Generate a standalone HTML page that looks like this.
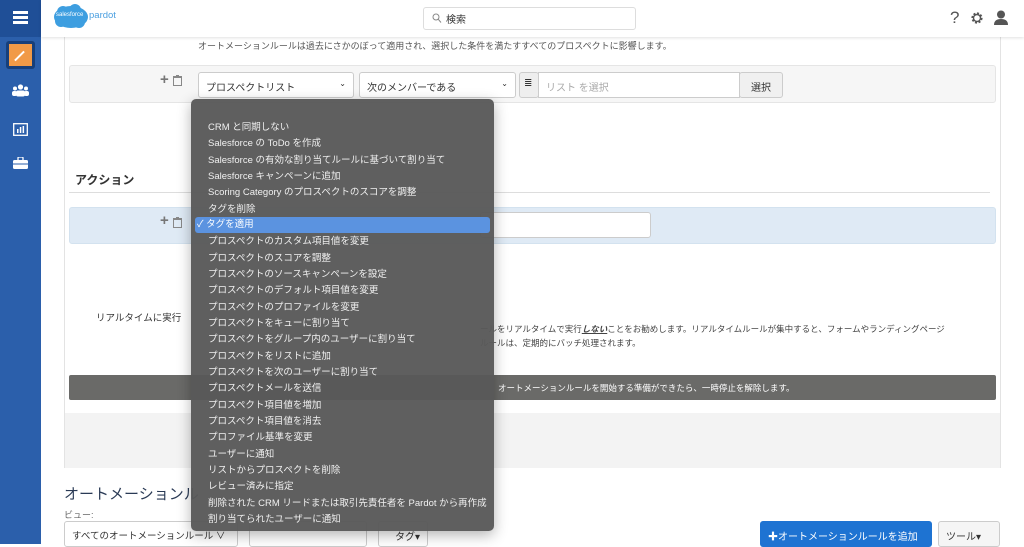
<!DOCTYPE html>
<html><head><meta charset="utf-8"><style>
*{box-sizing:border-box;margin:0;padding:0}
body{width:1024px;height:544px;overflow:hidden;background:#fff;font-family:"Liberation Sans","Noto Sans CJK JP",sans-serif;font-size:9px;color:#333;position:relative}
.a{position:absolute}
.sb{left:0;top:0;width:41px;height:544px;background:#2b5fab}
.hd{left:41px;top:0;right:0;height:37px;background:#fff;box-shadow:0 1px 3px rgba(0,0,0,.12);z-index:2}
.box{border:1px solid #ddd;border-radius:3px}
.sel{background:#fff;border:1px solid #ccc;border-radius:3px;height:26px;font-size:10px;padding:6px 7px;color:#333}
.menu{left:191px;top:99px;width:303px;height:432px;background:rgba(88,88,88,.96);border-radius:5px;z-index:5;box-shadow:0 4px 14px rgba(0,0,0,.3)}
.menu div{position:absolute;left:17px;font-size:9.5px;color:#f0f0f0;white-space:nowrap;line-height:16px}
</style></head><body>
<div class="a sb"></div>
<div class="a" style="left:0;top:0;width:41px;height:37px;background:#1f4f97"></div>
<div class="a" style="left:13px;top:11px;width:15px;height:2.5px;background:#fff;box-shadow:0 5px 0 #fff,0 10px 0 #fff"></div>
<div class="a" style="left:6px;top:41px;width:29px;height:28px;background:#173f7a;border-radius:3px"></div>
<div class="a" style="left:9px;top:44px;width:23px;height:22px;background:#f19a47"></div>
<div class="a" style="left:13px;top:55px;width:13px;height:2px;background:#fff;transform:rotate(-45deg)"></div>
<svg class="a" style="left:12px;top:84px" width="17" height="13"><circle cx="8.5" cy="3" r="2.6" fill="#fff"/><circle cx="3" cy="4.5" r="2" fill="#fff"/><circle cx="14" cy="4.5" r="2" fill="#fff"/><rect x="4" y="6.5" width="9" height="6" rx="2" fill="#fff"/><rect x="0" y="7" width="5" height="5" rx="2" fill="#fff"/><rect x="12" y="7" width="5" height="5" rx="2" fill="#fff"/></svg>
<svg class="a" style="left:13px;top:123px" width="15" height="13"><rect x=".7" y=".7" width="13.6" height="11.6" fill="none" stroke="#fff" stroke-width="1.3"/><rect x="4" y="6" width="1.5" height="4" fill="#fff"/><rect x="6.8" y="4" width="1.5" height="6" fill="#fff"/><rect x="9.6" y="3" width="1.5" height="7" fill="#fff"/></svg>
<svg class="a" style="left:13px;top:157px" width="15" height="12"><rect x="0" y="3" width="15" height="9" rx="1.5" fill="#fff"/><rect x="5" y="0" width="5" height="4" rx="1" fill="none" stroke="#fff" stroke-width="1.3"/><rect x="0" y="6.5" width="15" height="1" fill="#2b5fab"/></svg>

<div class="a hd">
 <svg class="a" style="left:12px;top:4px" width="36" height="26"><ellipse cx="18" cy="13" rx="17" ry="11" fill="#3d9ee0"/><circle cx="10" cy="8" r="6" fill="#3d9ee0"/><circle cx="22" cy="6" r="6" fill="#3d9ee0"/><circle cx="8" cy="17" r="6" fill="#3d9ee0"/><circle cx="26" cy="18" r="6" fill="#3d9ee0"/></svg>
 <div class="a" style="left:15px;top:12px;font-size:6px;color:#fff">salesforce</div>
 <div class="a" style="left:48px;top:10px;font-size:9.5px;color:#4a9fe0">pardot</div>
 <div class="a box" style="left:382px;top:7px;width:213px;height:23px;border-color:#ddd"></div>
 <svg class="a" style="left:391px;top:13px" width="10" height="11"><circle cx="4" cy="4" r="3" fill="none" stroke="#888" stroke-width="1"/><line x1="6.2" y1="6.2" x2="9" y2="9.5" stroke="#888"/></svg>
 <div class="a" style="left:405px;top:11px;font-size:10px;color:#333">検索</div>
 <div class="a" style="left:909px;top:8px;font-size:17px;color:#555">?</div>
 <svg class="a" style="left:929px;top:11px" width="14" height="14"><circle cx="7" cy="7" r="4.5" fill="none" stroke="#555" stroke-width="2.2" stroke-dasharray="2 1.5"/><circle cx="7" cy="7" r="3.5" fill="none" stroke="#555" stroke-width="1.4"/></svg>
 <svg class="a" style="left:952px;top:10px" width="16" height="16"><circle cx="8" cy="4.5" r="4" fill="#555"/><path d="M1 15 Q1 9 8 9 Q15 9 15 15Z" fill="#555"/></svg>
</div>

<div class="a" style="left:64px;top:37px;width:937px;height:431px;border:1px solid #e3e3e3;border-top:none;background:#fff"></div>
<div class="a" style="left:65px;top:413px;width:935px;height:55px;background:#f3f3f3"></div>
<div class="a" style="left:198px;top:39px;font-size:9px;color:#555">オートメーションルールは過去にさかのぼって適用され、選択した条件を満たすすべてのプロスペクトに影響します。</div>
<div class="a box" style="left:69px;top:65px;width:927px;height:38px;background:#f6f6f6;border-color:#e5e5e5"></div>
<div class="a" style="left:160px;top:71px;font-size:15px;color:#777;font-weight:bold">+</div>
<svg class="a" style="left:173px;top:75px" width="9" height="11"><rect x=".5" y="2.5" width="8" height="8" fill="none" stroke="#888"/><rect x="0" y="1" width="9" height="1.2" fill="#888"/><rect x="3" y="0" width="3" height="1.2" fill="#888"/></svg>
<div class="a sel" style="left:198px;top:72px;width:156px">プロスペクトリスト<span style="float:right;font-size:8px">⌄</span></div>
<div class="a sel" style="left:359px;top:72px;width:157px">次のメンバーである<span style="float:right;font-size:8px">⌄</span></div>
<div class="a sel" style="left:519px;top:72px;width:20px;background:#eee;padding:5px 4px;font-size:10px">≣</div>
<div class="a sel" style="left:538px;top:72px;width:202px;color:#aaa;border-radius:0">リスト を選択</div>
<div class="a sel" style="left:739px;top:72px;width:44px;background:#f0f0f0;text-align:center">選択</div>

<div class="a" style="left:75px;top:171px;font-size:12px;font-weight:bold;color:#333">アクション</div>
<div class="a" style="left:69px;top:192px;width:921px;height:1px;background:#ddd"></div>
<div class="a box" style="left:69px;top:207px;width:927px;height:37px;background:#dfeaf5;border-color:#d3e2ef"></div>
<div class="a" style="left:160px;top:212px;font-size:15px;color:#777;font-weight:bold">+</div>
<svg class="a" style="left:173px;top:217px" width="9" height="11"><rect x=".5" y="2.5" width="8" height="8" fill="none" stroke="#888"/><rect x="0" y="1" width="9" height="1.2" fill="#888"/><rect x="3" y="0" width="3" height="1.2" fill="#888"/></svg>
<div class="a sel" style="left:480px;top:212px;width:171px"></div>

<div class="a" style="left:96px;top:310px;font-size:9.5px;color:#333">リアルタイムに実行</div>
<div class="a" style="left:480px;top:323px;font-size:8.5px;color:#444;white-space:nowrap">ールをリアルタイムで実行<b><i><u>しない</u></i></b>ことをお勧めします。リアルタイムルールが集中すると、フォームやランディングページ</div>
<div class="a" style="left:480px;top:337px;font-size:8.5px;color:#444">ルールは、定期的にバッチ処理されます。</div>
<div class="a" style="left:69px;top:375px;width:927px;height:25px;background:#6a6a68;border-radius:2px"></div>
<div class="a" style="left:498px;top:382px;font-size:8.5px;color:#fff">オートメーションルールを開始する準備ができたら、一時停止を解除します。</div>

<div class="a" style="left:64px;top:483px;font-size:15px;color:#2a3a55">オートメーションル</div>
<div class="a" style="left:64px;top:508px;font-size:9px;color:#666">ビュー:</div>
<div class="a sel" style="left:64px;top:521px;width:174px;height:26px;font-size:9.5px">すべてのオートメーションルール ∨</div>
<div class="a sel" style="left:249px;top:521px;width:118px;height:26px"></div>
<div class="a sel" style="left:378px;top:521px;width:50px;height:26px;text-align:right">タグ▾</div>
<div class="a" style="left:760px;top:521px;width:172px;height:26px;background:#1e73d2;border-radius:3px;color:#fff;font-size:10px;padding:7px 8px">✚オートメーションルールを追加</div>
<div class="a sel" style="left:938px;top:521px;width:62px;height:26px;background:#f5f5f5">ツール▾</div>

<div class="a menu">
<div class="a" style="left:4px;top:118px;width:295px;height:16px;background:#5b93e0;border-radius:3px"></div>
<div style="top:21px">CRM と同期しない</div>
<div style="top:37.3px">Salesforce の ToDo を作成</div>
<div style="top:53.6px">Salesforce の有効な割り当てルールに基づいて割り当て</div>
<div style="top:70px">Salesforce キャンペーンに追加</div>
<div style="top:86.3px">Scoring Category のプロスペクトのスコアを調整</div>
<div style="top:102.6px">タグを削除</div>
<div style="top:118px;left:6px;color:#fff">✓ タグを適用</div>
<div style="top:135.3px">プロスペクトのカスタム項目値を変更</div>
<div style="top:151.6px">プロスペクトのスコアを調整</div>
<div style="top:168px">プロスペクトのソースキャンペーンを設定</div>
<div style="top:184.3px">プロスペクトのデフォルト項目値を変更</div>
<div style="top:200.6px">プロスペクトのプロファイルを変更</div>
<div style="top:217px">プロスペクトをキューに割り当て</div>
<div style="top:233.3px">プロスペクトをグループ内のユーザーに割り当て</div>
<div style="top:249.6px">プロスペクトをリストに追加</div>
<div style="top:266px">プロスペクトを次のユーザーに割り当て</div>
<div style="top:282.3px">プロスペクトメールを送信</div>
<div style="top:298.6px">プロスペクト項目値を増加</div>
<div style="top:315px">プロスペクト項目値を消去</div>
<div style="top:331.3px">プロファイル基準を変更</div>
<div style="top:347.6px">ユーザーに通知</div>
<div style="top:364px">リストからプロスペクトを削除</div>
<div style="top:380.3px">レビュー済みに指定</div>
<div style="top:396.6px">削除された CRM リードまたは取引先責任者を Pardot から再作成</div>
<div style="top:413px">割り当てられたユーザーに通知</div>
</div>
</body></html>
